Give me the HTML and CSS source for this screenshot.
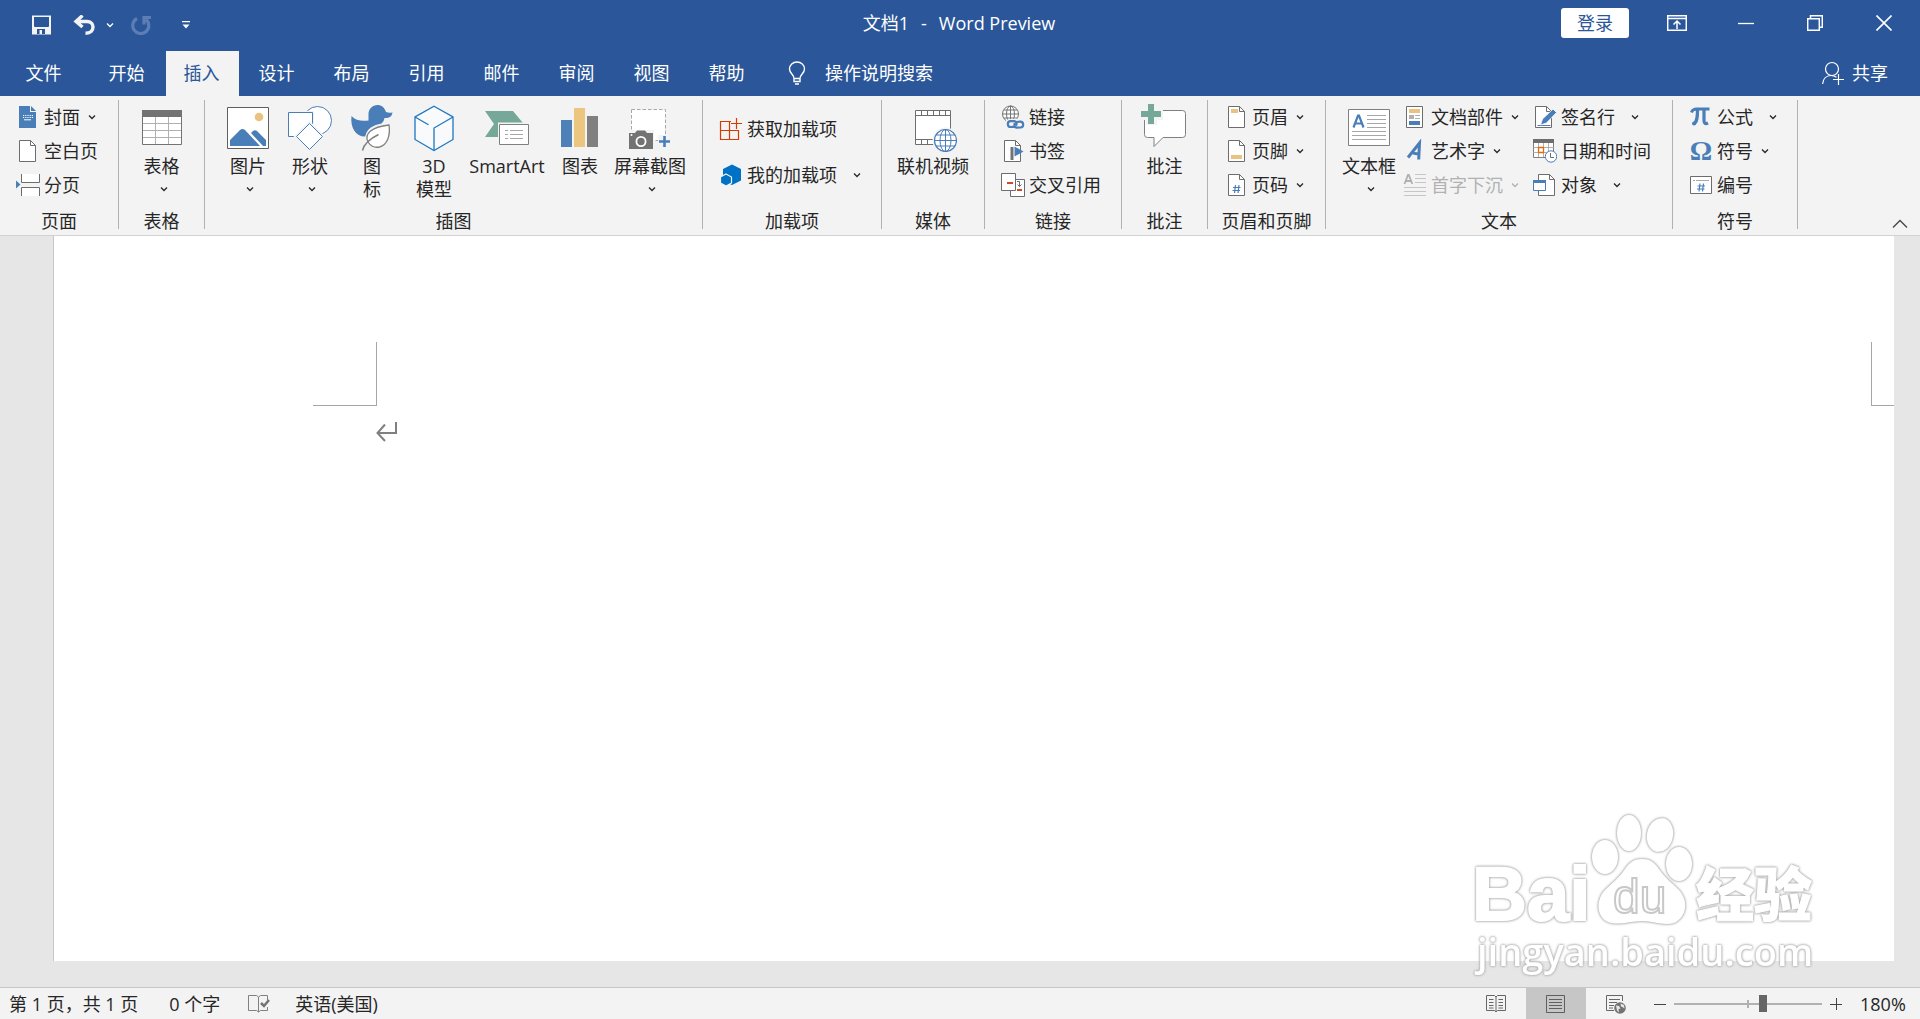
FILE: index.html
```html
<!DOCTYPE html>
<html lang="zh-CN">
<head>
    <meta charset="UTF-8">
    <meta name="viewport" content="width=device-width, initial-scale=1.0">
    <title>文档1 - Word Preview</title>
    <link rel="stylesheet" href="styles.css">
</head>
<body>
    <!-- Shared icon shapes -->
    <svg class="sprite" aria-hidden="true">
        <symbol id="chevron" viewBox="0 0 8 6"><path d="M1 1.5l3 3 3-3" fill="none" stroke="currentColor" stroke-width="1.3"/></symbol>
        <symbol id="page" viewBox="0 0 24 24"><path d="M4.5 1.5h11l5 5v16h-16z" fill="#fff" stroke="#6d6d6d"/><path d="M15.5 1.5v5h5" fill="none" stroke="#6d6d6d"/></symbol>
    </svg>

    <header class="header">
        <div class="title-bar">
            <div class="quick-access">
                <button class="bar-btn" aria-label="保存">
                    <svg width="20" height="20" viewBox="0 0 20 20"><path d="M1 .5h19v19H1z" fill="#f3f3f3"/><path d="M3 2h15v9.500l-1 .5H4l-1-.5zM6 14h8v5h-3v-4H8.500v4H6z" fill="#2b579a"/></svg>
                </button>
                <button class="bar-btn undo" aria-label="撤消">
                    <svg width="22" height="20" viewBox="0 0 22 20"><path d="M9.500 .5L3 6.500l6.500 5.500M3 6.500H14c4 0 6 2.500 6 5.500s-2 6.200-7.500 6.200" fill="none" stroke="#f3f3f3" stroke-width="3.400"/></svg>
                </button>
                <button class="bar-btn undo-more" aria-label="撤消选项"><svg class="chevron" width="8" height="6"><use href="#chevron"/></svg></button>
                <button class="bar-btn redo" aria-label="恢复">
                    <svg width="20" height="20" viewBox="0 0 20 20"><path d="M6 3.500A8 8 0 1 0 15 4.500M13 9.500V2.500h7" fill="none" stroke="#5c7eb4" stroke-width="3.200"/></svg>
                </button>
                <button class="bar-btn customize" aria-label="自定义快速访问工具栏">
                    <svg width="8" height="8" viewBox="0 0 8 8"><path d="M0 0h8v1.300H0zM.5 3.500h7L4 7.500z" fill="#fff"/></svg>
                </button>
            </div>
            <div class="title"><span>文档1</span><span>-</span><span>Word Preview</span></div>
            <div class="window-controls">
                <button class="login">登录</button>
                <button class="win-btn" aria-label="功能区显示选项">
                    <svg width="20" height="16" viewBox="0 0 20 16"><path d="M.7.7h18.600v14.600H.7zM1 3.500h18M10 14V6M6.500 9.500L10 6l3.500 3.500" fill="none" stroke="#fff" stroke-width="1.500"/></svg>
                </button>
                <button class="win-btn" aria-label="最小化">
                    <svg width="16" height="16" viewBox="0 0 16 16"><path d="M0 8.500h16" stroke="#fff" stroke-width="1.300"/></svg>
                </button>
                <button class="win-btn" aria-label="向下还原">
                    <svg width="16" height="16" viewBox="0 0 16 16"><path d="M.7 3.700h11.600v11.600H.7zM3.500 3.500V.7h11.800v11.600h-3" fill="none" stroke="#fff" stroke-width="1.500"/></svg>
                </button>
                <button class="win-btn" aria-label="关闭">
                    <svg width="16" height="16" viewBox="0 0 16 16"><path d="M.5.5l15 15M15.500.5l-15 15" stroke="#fff" stroke-width="1.600"/></svg>
                </button>
            </div>
        </div>
        <nav class="tabs">
            <button class="tab tab-file">文件</button>
            <button class="tab">开始</button>
            <button class="tab active">插入</button>
            <button class="tab">设计</button>
            <button class="tab">布局</button>
            <button class="tab">引用</button>
            <button class="tab">邮件</button>
            <button class="tab">审阅</button>
            <button class="tab">视图</button>
            <button class="tab">帮助</button>
            <button class="tell-me">
                <svg width="18" height="24" viewBox="0 0 18 24"><path d="M6 17.500c0-4-4.500-5-4.500-9.500a7.500 7 0 0 1 15 0c0 4.500-4.500 5.500-4.500 9.500zM6 18v2.500h6V18M7 23h4" fill="none" stroke="#fff" stroke-width="1.400"/></svg>
                操作说明搜索
            </button>
            <button class="share">
                <svg width="22" height="24" viewBox="0 0 22 24"><circle cx="10" cy="8" r="6.500" fill="none" stroke="#fff" stroke-width="1.200"/><path d="M.6 23c.4-5 3.500-8.500 8.400-8.500 2 0 4 .7 5.500 1.700M16.500 13v11M11 18.500h11" fill="none" stroke="#fff" stroke-width="1.200"/></svg>
                共享
            </button>
        </nav>
    </header>

    <div class="ribbon">
        <section class="group group-pages">
            <div class="group-body">
                <div class="stack">
                    <button class="small-btn">
                        <svg class="icon" viewBox="0 0 24 24"><path d="M3 1h11v6h6v16H3z" fill="#4a7eb8"/><path d="M15 1l5 5h-5z" fill="#4a7eb8"/><path d="M7 10.500h10M7 12.500h10" stroke="#fff" stroke-width="1.200" stroke-dasharray="1.200 1"/><path d="M8 14.800h7" stroke="#fff"/></svg>
                        封面<svg class="chevron" width="8" height="6"><use href="#chevron"/></svg>
                    </button>
                    <button class="small-btn"><svg class="icon" viewBox="0 0 24 24"><path d="M3.500 1.500h11l5 5v16h-16z" fill="#fff" stroke="#6d6d6d"/><path d="M14.500 1.500v5h5" fill="none" stroke="#6d6d6d"/></svg>空白页</button>
                    <button class="small-btn">
                        <svg class="icon" viewBox="0 0 24 24"><path d="M5.500 1v8.500h18V1M5.500 23v-8.500h18V23" fill="#fff" stroke="#6d6d6d"/><path d="M0 7.500l4.500 4L0 15.500z" fill="#4a7eb8"/></svg>
                        分页
                    </button>
                </div>
            </div>
            <div class="group-label">页面</div>
        </section>

        <section class="group group-table">
            <div class="group-body centered">
                <button class="big-btn">
                    <svg class="big-icon" viewBox="0 0 48 48"><path d="M4.500 6.500h39v34h-39z" fill="#fff" stroke="#737373"/><path d="M4 6h40v7H4z" fill="#737373"/><path d="M5 19.500h38M5 26.500h38M5 33.500h38M17.500 13v27M30.500 13v27" stroke="#b0b0b0"/></svg>
                    表格<svg class="chevron" width="8" height="6"><use href="#chevron"/></svg>
                </button>
            </div>
            <div class="group-label">表格</div>
        </section>

        <section class="group group-illustrations">
            <div class="group-body">
                <button class="big-btn">
                    <svg class="big-icon" viewBox="0 0 48 48"><path d="M3.500 3.500h41v41h-41z" fill="#fff" stroke="#5f5f5f"/><circle cx="35" cy="13" r="4.300" fill="#eac282"/><path d="M6 42v-6l10-10q2.500-2 5 0l15 16zM27 29l2-2q2-1.500 4 0l9 9v6h-3z" fill="#4a7eb8"/></svg>
                    图片<svg class="chevron" width="8" height="6"><use href="#chevron"/></svg>
                </button>
                <button class="big-btn">
                    <svg class="big-icon" viewBox="0 0 48 48"><g fill="#fff" stroke="#4a7eb8"><circle cx="31.500" cy="16.500" r="14"/><path d="M2.500 8.500h24v24h-24z" stroke="#f3f3f3" stroke-width="3"/><path d="M2.500 8.500h24v24h-24z"/><path d="M23.500 18L38 32.500 23.500 47 9 32.500z" stroke="#f3f3f3" stroke-width="2"/><path d="M23.500 19.500L36.500 32.500 23.500 45.500 10.500 32.500z"/></g></svg>
                    形状<svg class="chevron" width="8" height="6"><use href="#chevron"/></svg>
                </button>
                <button class="big-btn">
                    <svg class="big-icon" viewBox="0 0 48 48"><path d="M3.500 12c4 4.500 10 5.500 17 4.500V10c0-5 4-9 9-9 4 0 7 2.500 8.500 7 2.500 1 4.500.8 6.500.5-.5 4-3.500 5.800-8 5.500-.5 2.500-1.500 4-3 5.500-8 1.500-15 5-16 13-9 .5-15.500-8-14-20.500z" fill="#4a7eb8"/><path d="M15 46c1-4 3-6 5-8-4-8 3-16 21-17.500 1.500 10-1.500 20-9.500 22.500-5 1-8-.5-11.500-5" fill="#fff" stroke="#f3f3f3" stroke-width="3"/><path d="M20 38c-4-8 3-15 21-17 1.500 10-1.500 20-9.500 22-5 1-8.500-.5-11.500-5" fill="#fff" stroke="#808080" stroke-width="1.300"/><path d="M14.500 46.500c1.500-7 7-11.500 16-16" fill="none" stroke="#808080" stroke-width="1.600"/></svg>
                    图<br>标
                </button>
                <button class="big-btn">
                    <svg class="big-icon" viewBox="0 0 48 48"><path d="M24 2.200l19 10.800v22.500L24 46.500 5 35.500V13z" fill="#f9fafc" stroke="#1c77c4" stroke-width="1.300"/><path d="M43 13L24 24v22.500M5 13l13.500 7.800" fill="none" stroke="#1c77c4" stroke-width="1.300"/></svg>
                    3D<br>模型
                </button>
                <button class="big-btn btn-smartart">
                    <svg class="big-icon" viewBox="0 0 48 48"><path d="M2 7h28l10 12-10 14H2l9-13z" fill="#75a898"/><path d="M15 18.500h32v24H15z" fill="#f3f3f3"/><path d="M16.500 20.500h29v20h-29z" fill="#fff" stroke="#808080"/><path d="M22 26.500h3M22 30.500h3M22 34.500h3M27 26.500h13M27 30.500h13M27 34.500h13" stroke="#a8a8a8"/></svg>
                    SmartArt
                </button>
                <button class="big-btn">
                    <svg class="big-icon" viewBox="0 0 48 48"><path d="M5 16h11v27H5z" fill="#4e81b8"/><path d="M18 4h11v39H18z" fill="#ecc67e"/><path d="M31 12h11v31H31z" fill="#808080"/></svg>
                    图表
                </button>
                <button class="big-btn btn-screenshot">
                    <svg class="big-icon" viewBox="0 0 48 48"><path d="M5.500 5.500h34v31h-34z" fill="#fff" stroke="#a8a8a8" stroke-dasharray="3.500 2"/><path d="M2 26h26v20H2zM32 31h13v13H32z" fill="#f3f3f3"/><path d="M3 29h6l2-2.500h8l2 2.500h6v16H3z" fill="#737373"/><circle cx="15" cy="37.500" r="4.600" fill="#737373" stroke="#fff" stroke-width="1.800"/><circle cx="5.500" cy="31" r="1" fill="#fff"/><path d="M38.500 32v11M33 37.500h11" stroke="#4a7eb8" stroke-width="2.600"/></svg>
                    屏幕截图<svg class="chevron" width="8" height="6"><use href="#chevron"/></svg>
                </button>
            </div>
            <div class="group-label">插图</div>
        </section>

        <section class="group group-addins">
            <div class="group-body">
                <div class="stack stack-two">
                    <button class="small-btn">
                        <svg class="icon" viewBox="0 0 24 24"><path d="M12 4.500H1.500v18h18V13.500H1.500M10.500 4.500v18M17.500 1v11M12 6.500h11" fill="none" stroke="#d83b01" stroke-width="1.200"/></svg>
                        获取加载项
                    </button>
                    <button class="small-btn">
                        <svg class="icon" viewBox="0 0 24 24"><path d="M13 1.500l9 4.500v11.500L13 22l-9-4.500V6z" fill="#0072c6"/><path d="M7 11l5.500 3v6L7 23l-5.500-3v-6z" fill="#0072c6" stroke="#f3f3f3" stroke-width="1.200"/></svg>
                        我的加载项<svg class="chevron far" width="8" height="6"><use href="#chevron"/></svg>
                    </button>
                </div>
            </div>
            <div class="group-label">加载项</div>
        </section>

        <section class="group group-media">
            <div class="group-body centered">
                <button class="big-btn btn-video">
                    <svg class="big-icon" viewBox="0 0 48 48"><path d="M6.500 6.500h35v34h-35z" fill="#fff" stroke="#6d6d6d"/><path d="M6.500 11.500h35M6.500 35.500h35M12.500 6.500v5M18.500 6.500v5M24.500 6.500v5M30.500 6.500v5M36.500 6.500v5M12.500 35.500v5M18.500 35.500v5M24.500 35.500v5" fill="none" stroke="#6d6d6d"/><circle cx="36.500" cy="36.500" r="13" fill="#f3f3f3"/><circle cx="36.500" cy="36.500" r="11" fill="#fff" stroke="#4a7eb8" stroke-width="1.200"/><path d="M25.500 36.500h22M36.500 25.500v22M27.500 31h18M27.500 42h18" stroke="#4a7eb8"/><ellipse cx="36.500" cy="36.500" rx="5.500" ry="11" fill="none" stroke="#4a7eb8"/></svg>
                    联机视频
                </button>
            </div>
            <div class="group-label">媒体</div>
        </section>

        <section class="group group-links">
            <div class="group-body">
                <div class="stack">
                    <button class="small-btn">
                        <svg class="icon" viewBox="0 0 24 24"><circle cx="9.500" cy="9" r="8" fill="#fff" stroke="#737373"/><path d="M1.500 9h16M9.500 1v16M3 5h13M3 13h13" stroke="#737373"/><ellipse cx="9.500" cy="9" rx="4" ry="8" fill="none" stroke="#737373"/><path d="M5 15q9-2.500 19 0v9H5z" fill="#f3f3f3"/><path d="M13.500 21.700l-3.500.3a2.900 2.900 0 0 1-.5-5.800l4-.2a2.900 2.900 0 0 1 1.500 4.500M15.500 17l3.500-.3a2.900 2.900 0 0 1 .5 5.800l-4 .2a2.900 2.900 0 0 1-1.500-4.500" fill="none" stroke="#4a7eb8" stroke-width="2.200"/></svg>
                        链接
                    </button>
                    <button class="small-btn">
                        <svg class="icon" viewBox="0 0 24 24"><use href="#page" width="24" height="24" x="-1"/><path d="M9.500 8h3v13h-3z" fill="#737373"/><path d="M13.500 7.500l9 5-9 5z" fill="#4a7eb8"/></svg>
                        书签
                    </button>
                    <button class="small-btn">
                        <svg class="icon" viewBox="0 0 24 24"><path d="M9.500 6.500h14v17h-14z" fill="#fff" stroke="#6d6d6d"/><path d="M.5.500h14v17H.5z" fill="#fff" stroke="#6d6d6d"/><path d="M6 9h6v2H6zM16 16h5v2h-5z" fill="#d24726"/><path d="M16 8.500h2.500v5M16.500 11.500l2 2 2-2" fill="none" stroke="#6d6d6d"/></svg>
                        交叉引用
                    </button>
                </div>
            </div>
            <div class="group-label">链接</div>
        </section>

        <section class="group group-comments">
            <div class="group-body centered">
                <button class="big-btn">
                    <svg class="big-icon" viewBox="0 0 48 48"><path d="M6.500 6.500h35q3 0 3 3v21q0 3-3 3H22l-9 9v-9H6.500q-3 0-3-3v-21q0-3 3-3z" fill="#fff" stroke="#808080"/><path d="M0 5h22v11H0zM5 0h11v21H5z" fill="#f3f3f3"/><path d="M7 0h6v7h7v6h-7v7H7v-7H0V7h7z" fill="#75a898"/></svg>
                    批注
                </button>
            </div>
            <div class="group-label">批注</div>
        </section>

        <section class="group group-header-footer">
            <div class="group-body">
                <div class="stack">
                    <button class="small-btn">
                        <svg class="icon" viewBox="0 0 24 24"><use href="#page" width="24" height="24"/><path d="M7 4h7v4H7z" fill="#eac282"/></svg>
                        页眉<svg class="chevron" width="8" height="6"><use href="#chevron"/></svg>
                    </button>
                    <button class="small-btn">
                        <svg class="icon" viewBox="0 0 24 24"><use href="#page" width="24" height="24"/><path d="M7 16h11v4H7z" fill="#eac282"/></svg>
                        页脚<svg class="chevron" width="8" height="6"><use href="#chevron"/></svg>
                    </button>
                    <button class="small-btn">
                        <svg class="icon" viewBox="0 0 24 24"><use href="#page" width="24" height="24"/><path d="M11.500 12l-1 8M15 12l-1 8M9 14.500h7.500M8.500 17.500H16" stroke="#4a7eb8" stroke-width="1.200"/></svg>
                        页码<svg class="chevron" width="8" height="6"><use href="#chevron"/></svg>
                    </button>
                </div>
            </div>
            <div class="group-label">页眉和页脚</div>
        </section>

        <section class="group group-text">
            <div class="group-body">
                <button class="big-btn btn-textbox">
                    <svg class="big-icon" viewBox="0 0 48 48"><path d="M3.500 5.500h41v36h-41z" fill="#fff" stroke="#808080"/><path d="M22 11.500h19M22 15.500h19M22 19.500h19M22 23.500h19M7 27.500h34M7 31.500h34M7 35.500h34" stroke="#a8a8a8"/><path d="M8.500 23.500l4.500-12h1l4.500 12M10 19.500h7" fill="none" stroke="#4a7eb8" stroke-width="2.200"/></svg>
                    文本框<svg class="chevron" width="8" height="6"><use href="#chevron"/></svg>
                </button>
                <div class="stack stack-parts">
                    <button class="small-btn">
                        <svg class="icon" viewBox="0 0 24 24"><path d="M3.500 1.500h16v21h-16z" fill="#fff" stroke="#6d6d6d"/><path d="M6 4h11v4H6z" fill="#eac282"/><path d="M6 10h5v4H6z" fill="#b0b0b0"/><path d="M12 10.500h5M12 13.500h5" stroke="#b0b0b0"/><path d="M6 16h11v4H6z" fill="#4a7eb8"/></svg>
                        文档部件<svg class="chevron" width="8" height="6"><use href="#chevron"/></svg>
                    </button>
                    <button class="small-btn">
                        <svg class="icon" viewBox="0 0 24 24"><path d="M5 18.500L16.500 4l-.8 16.500M9 13.500q4 2 7.500.5" fill="none" stroke="#4a7eb8" stroke-width="3"/></svg>
                        艺术字<svg class="chevron" width="8" height="6"><use href="#chevron"/></svg>
                    </button>
                    <button class="small-btn" disabled>
                        <svg class="icon" viewBox="0 0 24 24"><path d="M1.500 11L5 2h.8l3.500 9M2.500 8h6" fill="none" stroke="#b0b0b0" stroke-width="1.800"/><path d="M12 1.500h11M12 5.500h11M12 9.500h11M1 14.500h22M1 18.500h22M1 22.500h22" stroke="#c6c6c6"/></svg>
                        首字下沉<svg class="chevron" width="8" height="6"><use href="#chevron"/></svg>
                    </button>
                </div>
                <div class="stack">
                    <button class="small-btn">
                        <svg class="icon" viewBox="0 0 24 24"><use href="#page" width="24" height="24" x="-2"/><path d="M4.500 20.500h13" stroke="#4a7eb8"/><path d="M7.500 20l2-6L20 4l3.500 3.500L13.500 18z" fill="#4a7eb8" stroke="#fff" stroke-width=".8"/></svg>
                        签名行<svg class="chevron far" width="8" height="6"><use href="#chevron"/></svg>
                    </button>
                    <button class="small-btn">
                        <svg class="icon" viewBox="0 0 24 24"><path d="M.5.500h20v18H.5z" fill="#fff" stroke="#808080"/><path d="M0 0h21v4H0z" fill="#6d6d6d"/><path d="M.5 8.500h20M.5 13.500h20M5.500 4v14M10.500 4v14M15.500 4v14" stroke="#b0b0b0"/><path d="M5.500 8.500h5v5h-5z" fill="#fff" stroke="#e06c0a" stroke-width="1.300"/><circle cx="18" cy="17.500" r="5.700" fill="#fff" stroke="#4a7eb8"/><path d="M17.500 14v4.500H21" fill="none" stroke="#6d6d6d"/></svg>
                        日期和时间
                    </button>
                    <button class="small-btn">
                        <svg class="icon" viewBox="0 0 24 24"><use href="#page" width="24" height="24" x="1"/><path d="M.5 7.500h12v10H.5z" fill="#fff" stroke="#4a7eb8"/><path d="M0 7h13v3H0z" fill="#4a7eb8"/></svg>
                        对象<svg class="chevron far" width="8" height="6"><use href="#chevron"/></svg>
                    </button>
                </div>
            </div>
            <div class="group-label">文本</div>
        </section>

        <section class="group group-symbols">
            <div class="group-body">
                <div class="stack">
                    <button class="small-btn">
                        <svg class="icon" viewBox="0 0 24 24"><path d="M2.500 7.500Q3.500 4 8 4h12.500" fill="none" stroke="#4a7eb8" stroke-width="3"/><path d="M8.500 4.500c0 6 0 12-3.500 14.500M15 4.500v11q0 4.500 4 2.500" fill="none" stroke="#4a7eb8" stroke-width="3.200"/><circle cx="5" cy="18.500" r="2" fill="#4a7eb8"/></svg>
                        公式<svg class="chevron far" width="8" height="6"><use href="#chevron"/></svg>
                    </button>
                    <button class="small-btn">
                        <span class="icon glyph">Ω</span>
                        符号<svg class="chevron" width="8" height="6"><use href="#chevron"/></svg>
                    </button>
                    <button class="small-btn">
                        <svg class="icon" viewBox="0 0 24 24"><path d="M1.500 3.500h21v17h-21z" fill="#fff" stroke="#6d6d6d"/><path d="M4 7.500h2M7 7.500h13" stroke="#a8a8a8"/><path d="M11 10.500l-1 8M14.500 10.500l-1 8M8.500 13h7.500M8 16h7.500" stroke="#4a7eb8" stroke-width="1.200"/></svg>
                        编号
                    </button>
                </div>
            </div>
            <div class="group-label">符号</div>
        </section>

        <button class="collapse" aria-label="折叠功能区">
            <svg width="16" height="10" viewBox="0 0 16 10"><path d="M1 8.500l7-7 7 7" fill="none" stroke="#444" stroke-width="1.300"/></svg>
        </button>
    </div>

    <main class="canvas">
        <div class="document">
            <div class="margin-marks">
                <span class="mark mark-left"></span>
                <span class="mark mark-right"></span>
            </div>
            <svg class="paragraph-mark" width="22" height="20" viewBox="0 0 22 20"><path d="M20 0v11H2M9 2.500L1.500 11 9 19" fill="none" stroke="#808080" stroke-width="2"/></svg>
        </div>
        <!-- Site watermark -->
        <svg class="watermark" width="360" height="176" viewBox="0 0 360 176">
            <g fill="#fff">
                <text class="wm-bai" x="4" y="114">Bai</text>
                <ellipse cx="137" cy="51" rx="13" ry="17"/>
                <ellipse cx="161" cy="27" rx="12" ry="18"/>
                <ellipse cx="192" cy="29" rx="13" ry="17" transform="rotate(12 192 29)"/>
                <ellipse cx="211" cy="58" rx="13" ry="17"/>
                <path d="M174 53c8 0 12 3 17 10 6 9 13 14 19 20 12 12 8 29-4 34-11 3-20-2-32-2s-23 5-34 1c-11-5-13-21-3-32 6-6 14-12 20-21 5-7 9-10 17-10z"/>
                <text class="wm-du" x="145" y="107">du</text>
                <text class="wm-cjk" x="228" y="110">经验</text>
                <text class="wm-url" x="9" y="160">jingyan.baidu.com</text>
            </g>
        </svg>
    </main>

    <footer class="status-bar">
        <span class="status-pages">第 1 页，共 1 页</span>
        <span class="status-words">0 个字</span>
        <button class="status-proof" aria-label="校对">
            <svg width="22" height="18" viewBox="0 0 22 18"><path d="M19.500 5V.5h-7L10.500 2l-2-1.500h-8v15h8l2 1.500 2-1.500h7V12M10.500 2v15" fill="none" stroke="#808080"/><path d="M13 8l3 3 5-6" fill="none" stroke="#737373" stroke-width="2.500"/></svg>
        </button>
        <span>英语(美国)</span>
        <div class="views">
            <button class="view-btn" aria-label="阅读视图">
                <svg width="20" height="18" viewBox="0 0 20 18"><path d="M10 2L8.500.5h-8v15h8L10 17l1.500-1.500h8V.5h-8zM10 2v15M3 4.500h4.500M3 7.500h4.500M3 10.500h4.500M3 13h4.500M12.500 4.500H17M12.500 7.500H17M12.500 10.500H17M12.500 13H17" fill="none" stroke="#666"/></svg>
            </button>
            <button class="view-btn active" aria-label="页面视图">
                <svg width="20" height="18" viewBox="0 0 20 18"><path d="M.5.500h18v17H.5zM3 4.500h13M3 7.500h13M3 10.500h13M3 13.500h13" fill="none" stroke="#5f5f5f"/></svg>
            </button>
            <button class="view-btn" aria-label="Web 版式视图">
                <svg width="20" height="20" viewBox="0 0 20 20"><path d="M8 16.500H.5V1.500h16V7M3 5.500h11M3 8.500h8M3 11.500h5M3 14h4" fill="none" stroke="#666"/><circle cx="14" cy="14" r="5.800" fill="#737373"/><path d="M10 11.500l3 .5 1.500 2.500-2 .5.500 3.500-2-2zM14.500 9.500l3.500 1.500.5 3.500-2-1.500-1.500-.5z" fill="#e8e8e8"/></svg>
            </button>
        </div>
        <div class="zoom">
            <button class="zoom-btn" aria-label="缩小"><svg width="12" height="12" viewBox="0 0 12 12"><path d="M0 6.500h12" stroke="#444"/></svg></button>
            <input class="zoom-slider" type="range" min="0" max="100" value="61" aria-label="缩放">
            <button class="zoom-btn" aria-label="放大"><svg width="12" height="12" viewBox="0 0 12 12"><path d="M0 6.500h12M6.500 0v12" stroke="#444"/></svg></button>
            <span class="zoom-value">180%</span>
        </div>
    </footer>
</body>
</html>
```

FILE: styles.css
```css
* {
    box-sizing: border-box;
}
body {
    margin: 0;
    min-height: 100vh;
    display: flex;
    flex-direction: column;
    font-family: "Open Sans", "Noto Sans CJK SC", sans-serif;
    font-size: 18px;
    line-height: 24px;
    color: #262626;
    background: #e6e6e6;
}
button {
    font: inherit;
    color: inherit;
    background: none;
    border: 0;
    padding: 0;
    cursor: pointer;
    white-space: nowrap;
}
svg {
    display: block;
    flex: none;
}
.sprite {
    position: absolute;
    width: 0;
    height: 0;
}

/* Title bar */
.header {
    background: #2b579a;
    color: #fff;
}
.title-bar {
    height: 51px;
    padding-bottom: 4px;
    display: grid;
    grid-template-columns: 1fr auto 1fr;
    align-items: center;
}
.quick-access {
    display: flex;
    align-items: center;
    padding: 2px 0 0 31px;
}
.undo {
    margin-left: 22px;
}
.undo-more {
    margin-left: 11px;
}
.redo {
    margin-left: 17px;
}
.customize {
    margin-left: 31px;
}
.title {
    display: flex;
    gap: 12px;
    padding: 0 2px 2px 0;
}
.window-controls {
    display: flex;
    align-items: center;
    justify-content: flex-end;
    padding: 0 2px 2px 0;
}
.login {
    width: 68px;
    height: 30px;
    margin-right: 13px;
    background: #fff;
    color: #2b579a;
    border-radius: 3px;
}
.win-btn {
    width: 69px;
    height: 44px;
    display: flex;
    align-items: center;
    justify-content: center;
}

/* Tabs */
.tabs {
    display: flex;
    gap: 2px;
    height: 45px;
}
.tab {
    width: 73px;
    padding: 0 2px 2px 0;
}
.tab-file {
    width: 89px;
}
.tab.active {
    background: #f3f3f3;
    color: #2b579a;
}
.tell-me,
.share {
    display: flex;
    align-items: center;
    padding-bottom: 2px;
}
.tell-me {
    gap: 19px;
    margin-left: 22px;
}
.share {
    gap: 8px;
    margin-left: auto;
    padding-right: 32px;
}

/* Ribbon */
.ribbon {
    display: flex;
    background: #f3f3f3;
    padding: 4px 0 6px;
    border-bottom: 1px solid #d2d2d2;
}
.group {
    flex: none;
    height: 129px;
    display: flex;
    flex-direction: column;
    justify-content: space-between;
    border-right: 1px solid #b1b1b1;
}
.group-body {
    display: flex;
    padding-left: 16px;
}
.group-body.centered {
    padding: 0;
    justify-content: center;
}
.group-label {
    line-height: 15px;
    text-align: center;
    white-space: nowrap;
}
.group-pages {
    width: 119px;
}
.group-table,
.group-comments {
    width: 86px;
}
.group-illustrations {
    width: 498px;
}
.group-illustrations .group-body {
    padding-left: 12px;
}
.group-addins {
    width: 179px;
}
.group-media {
    width: 103px;
}
.group-links {
    width: 137px;
}
.group-header-footer {
    width: 118px;
}
.group-text {
    width: 347px;
}
.group-text .group-body {
    padding-left: 9px;
}
.group-symbols {
    width: 125px;
}
.stack {
    display: flex;
    flex-direction: column;
    align-items: flex-start;
}
.stack-two {
    gap: 12px;
    padding-top: 12px;
}
.stack-parts {
    width: 130px;
}
.small-btn {
    display: flex;
    align-items: center;
    gap: 4px;
    height: 34px;
}
.small-btn:disabled {
    color: #b1b1b1;
}
.icon {
    width: 24px;
    height: 24px;
}
.glyph {
    font-family: "Liberation Serif", serif;
    font-size: 28px;
    font-weight: bold;
    color: #4a7eb8;
}
.small-btn .chevron {
    margin-left: 4px;
}
.small-btn .chevron.far {
    margin-left: 12px;
}
.big-btn {
    width: 62px;
    padding-top: 4px;
    display: flex;
    flex-direction: column;
    align-items: center;
    line-height: 23px;
}
.big-icon {
    width: 48px;
    height: 48px;
    margin-bottom: 3px;
}
.big-btn .chevron {
    margin: 8px 0 0 4px;
}
.btn-smartart {
    width: 84px;
}
.btn-screenshot,
.btn-video {
    width: 78px;
}
.btn-textbox {
    width: 68px;
}
.collapse {
    margin-left: auto;
    padding-right: 12px;
    align-self: flex-end;
}

/* Document area */
.canvas {
    position: relative;
    flex: 1;
    display: flex;
    padding: 0 26px 26px 53px;
}
.document {
    flex: 1;
    background: #fff;
    border-left: 1px solid #c6c6c6;
    padding-top: 106px;
}
.margin-marks {
    display: flex;
    justify-content: space-between;
    padding-left: 259px;
}
.mark {
    height: 64px;
    border-bottom: 1px solid #a6a6a6;
}
.mark-left {
    width: 64px;
    border-right: 1px solid #a6a6a6;
}
.mark-right {
    width: 23px;
    border-left: 1px solid #a6a6a6;
}
.paragraph-mark {
    margin: 16px 0 0 322px;
}
.watermark {
    position: absolute;
    right: 92px;
    bottom: 5px;
    filter: drop-shadow(0 0 1px #aaa) drop-shadow(0 0 1px #bbb);
}
.wm-bai {
    font-family: "Liberation Sans", sans-serif;
    font-size: 76px;
    font-weight: bold;
    stroke: #fff;
    stroke-width: 2px;
}
.wm-du {
    font-family: "Liberation Sans", sans-serif;
    font-size: 48px;
    stroke: #c8c8c8;
    stroke-width: 2px;
}
.wm-cjk {
    font-family: "Noto Sans CJK SC", sans-serif;
    font-size: 58px;
    font-weight: 900;
    stroke: #fff;
    stroke-width: 1px;
}
.wm-url {
    font-family: "Open Sans", sans-serif;
    font-size: 38px;
    font-weight: 600;
}

/* Status bar */
.status-bar {
    display: flex;
    align-items: center;
    height: 32px;
    padding: 0 11px 0 9px;
    background: #f3f3f3;
    border-top: 1px solid #c6c6c6;
}
.status-words {
    margin-left: 31px;
}
.status-proof {
    margin: 0 25px 0 28px;
}
.views {
    display: flex;
    align-self: stretch;
    margin-left: auto;
}
.view-btn {
    width: 60px;
    display: flex;
    align-items: center;
    justify-content: center;
}
.view-btn.active {
    background: #c6c6c6;
}
.zoom {
    display: flex;
    align-items: center;
    padding-left: 8px;
}
.zoom-slider {
    -webkit-appearance: none;
    appearance: none;
    width: 148px;
    height: 18px;
    margin: 0 8px;
    background: linear-gradient(#b1b1b1, #b1b1b1) center / 100% 2px no-repeat,
        linear-gradient(#b1b1b1, #b1b1b1) center / 2px 8px no-repeat;
}
.zoom-slider::-webkit-slider-thumb {
    -webkit-appearance: none;
    appearance: none;
    width: 8px;
    height: 17px;
    background: #666;
}
.zoom-value {
    min-width: 49px;
    margin-left: 18px;
}
```
